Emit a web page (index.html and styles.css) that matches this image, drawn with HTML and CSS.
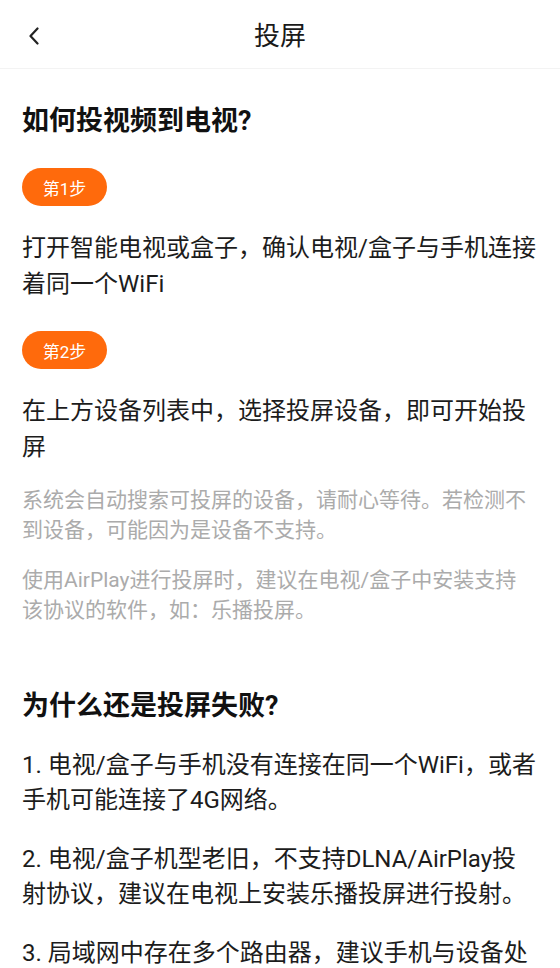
FILE: index.html
```html
<!DOCTYPE html>
<html lang="zh-CN">
<head>
<meta charset="utf-8">
<title>投屏</title>
<link rel="stylesheet" href="styles.css">
</head>
<body>
<header class="topbar">
  <button class="back" aria-label="返回">
    <svg width="12" height="18" viewBox="0 0 12 18"><path d="M9.5 1.5 L2.5 9 L9.5 16.5" fill="none" stroke="#222" stroke-width="2.2" stroke-linecap="round" stroke-linejoin="round"/></svg>
  </button>
  <h1 class="title">投屏</h1>
</header>
<main class="content">
  <h2 class="section-title first">如何投视频到电视?</h2>
  <span class="step">第1步</span>
  <p class="step-text">打开智能电视或盒子，确认电视/盒子与手机连接着同一个WiFi</p>
  <span class="step">第2步</span>
  <p class="step-text">在上方设备列表中，选择投屏设备，即可开始投屏</p>
  <p class="hint">系统会自动搜索可投屏的设备，请耐心等待。若检测不到设备，可能因为是设备不支持。</p>
  <p class="hint hint2">使用AirPlay进行投屏时，建议在电视/盒子中安装支持该协议的软件，如：乐播投屏。</p>
  <h2 class="section-title second">为什么还是投屏失败?</h2>
  <p class="item">1. 电视/盒子与手机没有连接在同一个WiFi，或者手机可能连接了4G网络。</p>
  <p class="item">2. 电视/盒子机型老旧，不支持DLNA/AirPlay投射协议，建议在电视上安装乐播投屏进行投射。</p>
  <p class="item">3. 局域网中存在多个路由器，建议手机与设备处于同一个路由器下。</p>
</main>
</body>
</html>
```

FILE: styles.css
```css
* { box-sizing: border-box; }
html, body { margin: 0; padding: 0; background: #fff; }
body {
  font-family: Roboto, "Noto Sans CJK SC", sans-serif;
  color: #1c1c1c;
  width: 560px;
  height: 968px;
  overflow: hidden;
}
.topbar {
  position: relative;
  height: 69px;
  border-bottom: 1px solid #f3f3f3;
  display: flex;
  align-items: center;
  justify-content: center;
}
.back {
  position: absolute;
  left: 22px;
  top: 24px;
  width: 24px;
  height: 24px;
  padding: 0;
  border: 0;
  background: none;
  display: flex;
  align-items: center;
  justify-content: center;
}
.title {
  margin: 0;
  font-size: 26px;
  font-weight: 400;
  line-height: 36px;
  color: #1a1a1a;
  margin-top: 4px;
}
.content {
  padding: 0 22px;
  display: flex;
  flex-direction: column;
  align-items: flex-start;
}
.section-title {
  margin: 0;
  font-size: 27px;
  font-weight: 700;
  line-height: 36px;
  color: #111;
}
.section-title.first { margin-top: 34px; }
.section-title.second { margin-top: 63px; }
.step {
  margin-top: 29px;
  display: inline-flex;
  align-items: center;
  justify-content: center;
  width: 85px;
  height: 38px;
  border-radius: 19px;
  background: #ff6a0c;
  color: #fff;
  font-size: 17px;
}
.step-text {
  margin: 24px 0 0;
  font-size: 24px;
  line-height: 36px;
  color: #1c1c1c;
}
.hint {
  margin: 20px 0 0;
  max-width: 512px;
  font-size: 21px;
  line-height: 30px;
  color: #ababab;
}
.hint2 { margin-top: 20px; }
.item {
  margin: 24px 0 0;
  font-size: 24px;
  line-height: 35px;
  color: #1c1c1c;
}
```
